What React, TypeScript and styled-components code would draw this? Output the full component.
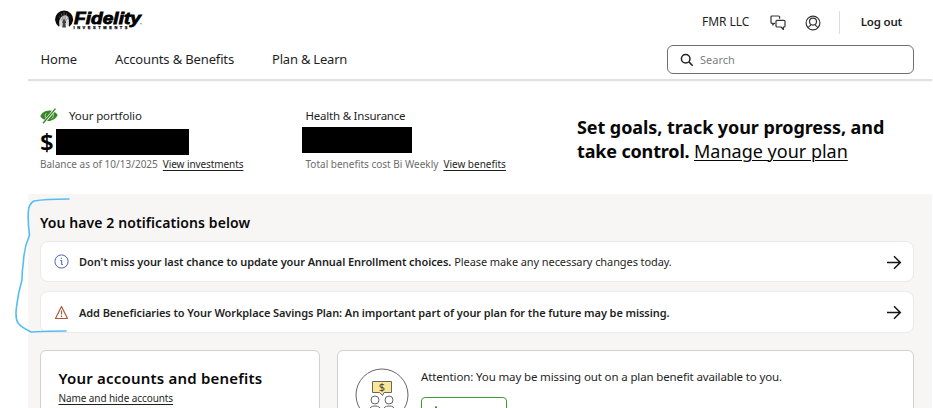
import React from "react";
import styled, { createGlobalStyle } from "styled-components";

const GlobalStyle = createGlobalStyle`
  *, *::before, *::after { box-sizing: border-box; }
  html, body { margin: 0; background: #fff; overflow: hidden; }
  body { font-family: "Noto Sans", "Open Sans", sans-serif; color: #1a1a1a; }
`;

const Page = styled.div`
  position: relative;
  width: 933px;
  height: 408px;
  padding: 0 1px 0 28px;
  overflow: hidden;
  background: #fff;
`;

const Text = styled.span<{ $size: number; $ls?: number; $weight?: number; $color?: string }>`
  font-size: ${(p) => p.$size}px;
  letter-spacing: ${(p) => p.$ls ?? 0}px;
  font-weight: ${(p) => p.$weight ?? 400};
  color: ${(p) => p.$color ?? "#1f1f1f"};
  line-height: 16px;
  white-space: nowrap;
`;

const Link = styled(Text).attrs({ as: "a" })`
  text-decoration: underline;
  text-underline-offset: 2px;
  text-decoration-thickness: 1px;
  text-decoration-skip-ink: none;
`;

const Header = styled.header`
  height: 82px;
  border-bottom: 1px solid #faf8f6;
  box-shadow: inset 0 -2px 0 #e3e1df;
`;

const TopBar = styled.div`
  display: flex;
  height: 43px;
  padding: 9px 30px 0 27px;
  justify-content: space-between;
`;

const Tools = styled.div`
  display: flex;
  height: 26px;
  align-items: center;
`;

const ChatIcon = styled.svg`
  margin: 1px 0 0 20.5px;
`;

const UserIcon = styled.svg`
  margin: 1px 18px 0 19px;
`;

const Divider = styled.span`
  width: 1px;
  height: 23px;
  margin-right: 21px;
  background: #dedede;
`;

const NavBar = styled.nav`
  display: flex;
  height: 36px;
  padding: 0 18px 0 12.5px;
  align-items: flex-start;
`;

const NavItem = styled(Text)<{ $width: number }>`
  width: ${(p) => p.$width}px;
  padding-top: 8px;
`;

const SearchBox = styled.div`
  display: flex;
  width: 247px;
  height: 29px;
  margin: 2px 0 0 auto;
  padding-left: 12px;
  align-items: center;
  gap: 6px;
  border: 1px solid #6f6f6f;
  border-radius: 6px;
`;

const Summary = styled.section`
  display: grid;
  grid-template-columns: 262px 275px 1fr;
  height: 112px;
  padding: 26px 0 0 12px;
`;

const Account = styled.div<{ $inset?: number }>`
  padding-left: ${(p) => p.$inset ?? 0}px;
`;

const AccountTitle = styled.div`
  display: flex;
  height: 16px;
  align-items: center;
  gap: 11px;
`;

const Amount = styled.div<{ $top: number; $left: number }>`
  display: flex;
  height: 32px;
  padding-top: ${(p) => p.$top}px;
  margin-left: ${(p) => p.$left}px;
`;

const Dollar = styled(Text)`
  width: 16px;
  line-height: 26px;
`;

const Redaction = styled.span<{ $width: number }>`
  width: ${(p) => p.$width}px;
  height: 26px;
  background: #000;
`;

const Caption = styled.div`
  display: flex;
  height: 16px;
  align-items: center;
  gap: 5px;
`;

const Goal = styled.p`
  margin: 7px 0 0;
  font-size: 18px;
  line-height: 24px;
  white-space: nowrap;
  color: #080808;
`;

const GoalText = styled.b<{ $ls: number }>`
  letter-spacing: ${(p) => p.$ls}px;
`;

const GoalLink = styled.a`
  text-decoration: underline;
  text-decoration-thickness: 1px;
  text-underline-offset: 2px;
`;

const Main = styled.main`
  height: 214px;
  padding: 21px 18px 0 12px;
  background: #f7f6f5;
`;

const SectionTitle = styled(Text).attrs({ as: "h2" })`
  display: block;
  height: 26px;
  margin: 0;
  line-height: 16px;
`;

const Notice = styled.div`
  display: flex;
  height: 41px;
  margin-bottom: 9px;
  padding: 0 11px 0 13px;
  align-items: center;
  background: #fff;
  border: 1px solid #ebeae8;
  border-radius: 8px;

  & + & {
    height: 42px;
  }
`;

const NoticeText = styled.div`
  display: flex;
  flex: 1;
  margin-left: 10px;
  padding-top: 1px;
  gap: 3px;
  align-items: center;
`;

const Cards = styled.div`
  display: grid;
  grid-template-columns: 280px 1fr;
  gap: 17px;
  margin-top: 17px;
`;

const Card = styled.div`
  height: 90px;
  background: #fff;
  border: 1px solid #d2d1d0;
  border-radius: 6px;
`;

const AccountsCard = styled(Card)`
  display: flex;
  flex-direction: column;
  align-items: flex-start;
  padding: 19px 0 0 17.5px;
  gap: 4px;
`;

const AttentionCard = styled(Card)`
  display: flex;
  padding: 17px 0 0 17px;
  gap: 12px;
`;

const AttentionBody = styled.div`
  display: flex;
  flex-direction: column;
  padding-top: 1px;
`;

const ActionButton = styled.button`
  display: flex;
  width: 86px;
  height: 30px;
  margin-top: 12px;
  padding: 8px 0 0 11px;
  background: #fff;
  border: 1px solid #3f9c35;
  border-radius: 4px;
`;

const Marker = styled.svg`
  position: absolute;
  left: 0;
  top: 190px;
  pointer-events: none;
`;

const Logo = () => (
  <svg width="90" height="22" viewBox="0 0 90 22">
    <path d="M4 17.800A9 9 0 1 1 14.200 17.800L12.600 14H5.600z" fill="#0c0c0c" />
    <path d="M4.200 15.500Q3.500 8 9 6.500T14 15.500L12 18 10.500 12H7.800L6.500 18z" fill="#ddd" />
    <path d="M9 3v9M6.300 4.500 8 11M11.700 4.500 10 11M4 7.500 7.500 12M14 7.500 10.500 12" stroke="#777" strokeWidth=".7" />
    <path d="M7.200 18.500l.9-8h2l.9 8z" fill="#444" />
    <text x="19" y="14.900" textLength="67" lengthAdjust="spacingAndGlyphs" fontFamily="Liberation Sans" fontSize="15.800" fontWeight="700" fontStyle="italic" stroke="#000" strokeWidth=".8">Fidelity</text>
    <text x="18.500" y="19.700" textLength="54" fontFamily="Liberation Sans" fontSize="4" fontWeight="700" stroke="#000" strokeWidth=".25">INVESTMENTS</text>
    <circle cx="86" cy="14.800" r=".5" />
  </svg>
);

const Chat = () => (
  <ChatIcon width="16" height="16" viewBox="0 0 16 16" fill="none" stroke="#333" strokeWidth="1.2" strokeLinejoin="round">
    <path d="M5 8.400H4L2.800 10V8.400H2a1 1 0 0 1-1-1V2a1 1 0 0 1 1-1h6.600a1 1 0 0 1 1 1v1.800" />
    <path d="M7 5.300h7a1 1 0 0 1 1 1V11a1 1 0 0 1-1 1h-.6v2.500L11 12H7a1 1 0 0 1-1-1V6.300a1 1 0 0 1 1-1z" />
  </ChatIcon>
);

const User = () => (
  <UserIcon width="16" height="16" viewBox="0 0 16 16" fill="none" stroke="#333" strokeWidth="1.15">
    <circle cx="8" cy="8" r="6.900" />
    <circle cx="8" cy="6.600" r="3.500" />
    <path d="M3.200 12.800c.8-1.500 1.700-2.200 2.800-2.600M12.800 12.800c-.8-1.500-1.700-2.200-2.800-2.600" />
  </UserIcon>
);

const HiddenEye = () => (
  <svg width="18" height="16" viewBox="0 0 18 16">
    <path d="M.3 8.500Q1.500 4 7.500 2.800T17.700 6.800Q16 11.500 10.500 12.700T.3 8.500z" fill="#368727" />
    <path d="M6.200 5.200a3.500 3.500 0 0 0-.4 4.600M12.300 5a3.500 3.500 0 0 1-1 5.800" fill="none" stroke="#fff" strokeWidth=".6" />
    <path d="M4 14.300 14.800 1.500" stroke="#fff" strokeWidth="2.800" />
    <path d="M3 15.300 15.500.6" stroke="#368727" strokeWidth="1.400" />
  </svg>
);

const Arrow = () => (
  <svg width="16" height="16" viewBox="0 0 16 16" fill="none" stroke="#151515" strokeWidth="1.5">
    <path d="M1 8.500h13.500M8 2.300 14.300 8.500 8 14.700" />
  </svg>
);

const People = () => (
  <svg width="54" height="54" viewBox="0 0 54 54" fill="none" stroke="#666" strokeWidth="1">
    <circle cx="27" cy="27" r="26" />
    <path d="M17.500 13.500h19v11h-7.500l-1.500 3-3-3h-7z" fill="#fbe795" />
    <text x="27" y="22.500" textAnchor="middle" fontFamily="Noto Sans" fontSize="11" fill="#444" stroke="none">$</text>
    <circle cx="20" cy="32" r="4" />
    <circle cx="34" cy="32" r="4" />
    <path d="M14.500 46v-4q0-4 5.500-4t5.500 4v4M28.500 46v-4q0-4 5.500-4t5.500 4v4" />
  </svg>
);

export default function App() {
  return (
    <Page>
      <GlobalStyle />
      <Header>
        <TopBar>
          <Logo />
          <Tools>
            <Text $size={12} $ls={-0.05}>FMR LLC</Text>
            <Chat />
            <User />
            <Divider />
            <Text $size={11.5} $weight={600} $ls={-0.2}>Log out</Text>
          </Tools>
        </TopBar>
        <NavBar>
          <NavItem $size={13} $ls={-0.1} $width={74.5}>Home</NavItem>
          <NavItem $size={13} $ls={-0.15} $width={157}>Accounts &amp; Benefits</NavItem>
          <NavItem $size={13} $ls={-0.21} $width={90}>Plan &amp; Learn</NavItem>
          <SearchBox>
            <svg width="14" height="14" viewBox="0 0 14 14" fill="none" stroke="#222" strokeWidth="1.500">
              <circle cx="5.700" cy="5.700" r="4.300" />
              <path d="m8.900 8.900 3.800 3.800" />
            </svg>
            <Text $size={11} $color="#808080">Search</Text>
          </SearchBox>
        </NavBar>
      </Header>
      <Summary>
        <Account>
          <AccountTitle>
            <HiddenEye />
            <Text $size={11.5} $ls={-0.12}>Your portfolio</Text>
          </AccountTitle>
          <Amount $top={5} $left={0}>
            <Dollar $size={24} $weight={600} $color="#000">$</Dollar>
            <Redaction $width={133} />
          </Amount>
          <Caption>
            <Text $size={10} $color="#6c6c6c">Balance as of 10/13/2025</Text>
            <Link $size={10} $ls={-0.08}>View investments</Link>
          </Caption>
        </Account>
        <Account $inset={3.5}>
          <AccountTitle>
            <Text $size={11.5} $ls={-0.22}>Health &amp; Insurance</Text>
          </AccountTitle>
          <Amount $top={3} $left={-3.5}>
            <Redaction $width={110} />
          </Amount>
          <Caption>
            <Text $size={10} $color="#6c6c6c">Total benefits cost Bi Weekly</Text>
            <Link $size={10}>View benefits</Link>
          </Caption>
        </Account>
        <Goal>
          <GoalText $ls={-0.08}>Set goals, track your progress, and</GoalText>
          <br />
          <GoalText $ls={-0.16}>take control. </GoalText>
          <GoalLink>Manage your plan</GoalLink>
        </Goal>
      </Summary>
      <Main>
        <SectionTitle $size={14} $weight={600} $ls={0.09} $color="#080808">You have 2 notifications below</SectionTitle>
        <Notice>
          <svg width="15" height="15" viewBox="0 0 15 15" fill="none" stroke="#4c63ae" strokeWidth="1">
            <circle cx="7.500" cy="7.500" r="6.600" />
            <path d="M6.300 6.500h1.400v4h1.200M7.400 3.700v1.200" />
          </svg>
          <NoticeText>
            <Text $size={11} $weight={600} $ls={-0.085}>Don't miss your last chance to update your Annual Enrollment choices.</Text>
            <Text $size={11} $ls={-0.09}>Please make any necessary changes today.</Text>
          </NoticeText>
          <Arrow />
        </Notice>
        <Notice>
          <svg width="15" height="15" viewBox="0 0 15 15" fill="none" stroke="#a75a3c" strokeWidth="1.200" strokeLinejoin="round">
            <path d="M7.500 1.500 13.500 13.500H1.500zM7.500 5.500v4M7.500 10.500v1.500" />
          </svg>
          <NoticeText>
            <Text $size={11} $weight={600} $ls={-0.088}>Add Beneficiaries to Your Workplace Savings Plan: An important part of your plan for the future may be missing.</Text>
          </NoticeText>
          <Arrow />
        </Notice>
        <Cards>
          <AccountsCard>
            <Text $size={15} $weight={600} $ls={0.2} $color="#080808">Your accounts and benefits</Text>
            <Link $size={10} $ls={-0.09}>Name and hide accounts</Link>
          </AccountsCard>
          <AttentionCard>
            <People />
            <AttentionBody>
              <Text $size={11.5} $ls={-0.135}>Attention: You may be missing out on a plan benefit available to you.</Text>
              <ActionButton aria-label="Review benefit">
                <svg width="10" height="10" viewBox="0 0 10 10" stroke="#368727" strokeWidth="1.500" fill="none">
                  <path d="M0 9 3 1 6 9M1.200 6h3.600" />
                </svg>
              </ActionButton>
            </AttentionBody>
          </AttentionCard>
        </Cards>
      </Main>
      <Marker width="80" height="150" viewBox="0 0 80 150" fill="none" stroke="#56bdf4" strokeWidth="1.600" strokeLinecap="round" strokeLinejoin="round">
        <path d="M69 9Q45 9 34 11Q29 14 28.500 20Q27.500 30 29.500 45Q24 58 23.500 71Q22 81 22 90Q18 103 16.500 117Q15 128 18 133Q21 137 31 142Q49 141 66 141" />
      </Marker>
    </Page>
  );
}
